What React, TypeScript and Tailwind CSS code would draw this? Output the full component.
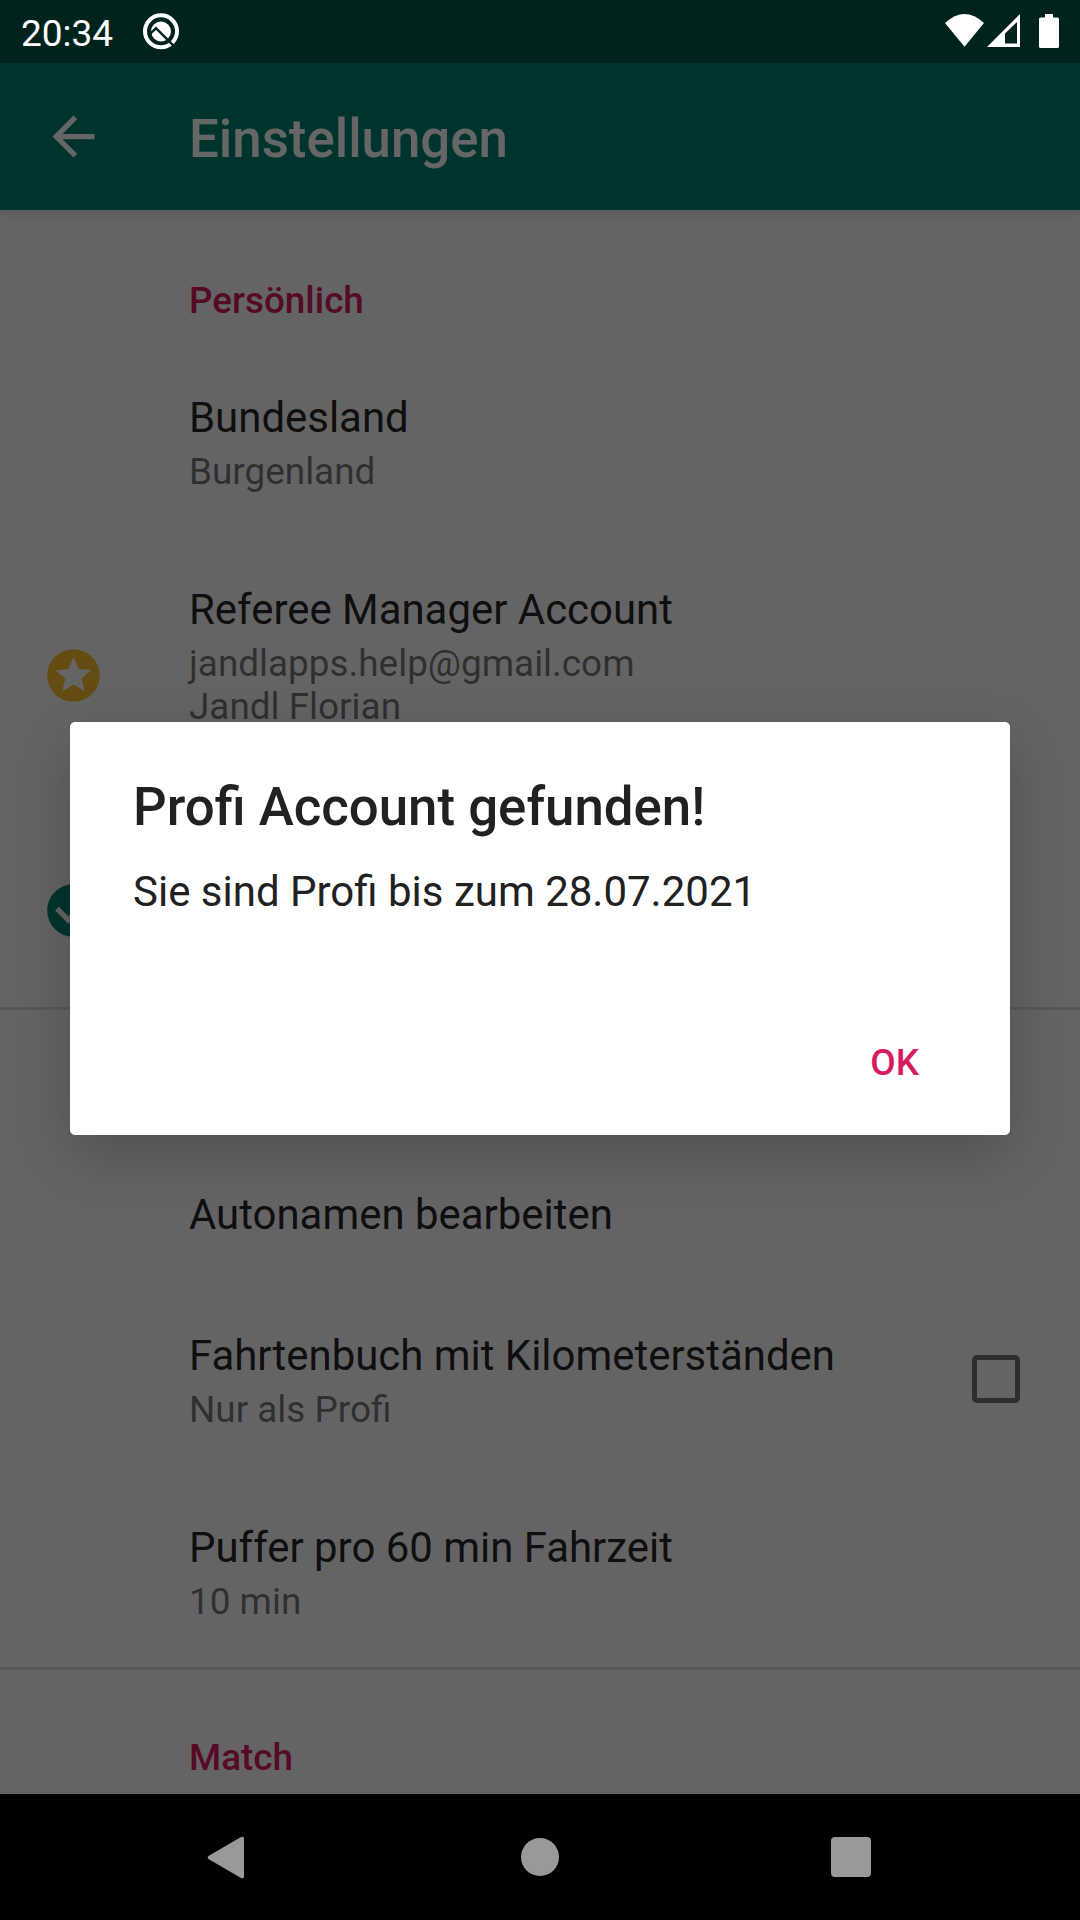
import type { ReactNode } from 'react';

interface PreferenceProps {
  title: string;
  summary?: string[];
  icon?: ReactNode;
  widget?: ReactNode;
}

function StarIcon() {
  return (
    <svg viewBox="0 0 24 24" className="w-[63px] h-[63px] fill-[#fbc02d]">
      <path d="M11.99 2C6.47 2 2 6.48 2 12s4.47 10 9.99 10C17.52 22 22 17.52 22 12S17.52 2 11.99 2zm4.24 16L12 15.45 7.77 18l1.12-4.81-3.73-3.23 4.92-.42L12 5l1.92 4.53 4.92.42-3.73 3.23L16.23 18z" />
    </svg>
  );
}

function CheckIcon() {
  return (
    <svg viewBox="0 0 24 24" className="w-[63px] h-[63px] fill-[#008577]">
      <path d="M12 2C6.48 2 2 6.48 2 12s4.48 10 10 10 10-4.48 10-10S17.52 2 12 2zm-2 15l-5-5 1.41-1.41L10 14.17l7.59-7.59L19 8l-9 9z" />
    </svg>
  );
}

function StatusBar() {
  return (
    <header className="flex h-[63px] justify-between bg-[#00231e] text-white">
      <div className="flex">
        <span className="ml-[21px] mt-[12px] w-[92px] text-[37px] leading-[43px]">20:34</span>
        <svg viewBox="0 0 40 40" className="ml-[28px] mt-[11px] w-10 h-10">
          <circle cx="20" cy="20.3" r="16" fill="none" stroke="#fff" strokeWidth="4" />
          <circle cx="20" cy="20.5" r="10" fill="#fff" />
          <path d="M9.5 25.500V22.500L15 17.200 33 35.200" fill="none" stroke="#00231e" strokeWidth="2.4" />
        </svg>
      </div>
      <svg viewBox="0 0 140 63" className="w-[140px] h-[63px] fill-white">
        <path d="M5 23Q24.5 5 44 23L24.5 46.7Z" />
        <path fillRule="evenodd" d="M47 47 80 14V47ZM65 33.5V43.5H77V22Z" />
        <path d="M105 14h8v3.5h4.5a1.5 1.5 0 0 1 1.5 1.5v27.5a1.5 1.5 0 0 1-1.5 1.5h-17a1.5 1.5 0 0 1-1.5-1.5V19a1.5 1.5 0 0 1 1.5-1.5h4.5z" />
      </svg>
    </header>
  );
}

function AppBar() {
  return (
    <div className="relative flex h-[147px] items-center bg-[#008577] pl-[42px] text-white shadow-[0_2px_10px_rgba(0,0,0,0.15)]">
      <svg viewBox="0 0 24 24" className="w-[63px] h-[63px] fill-white">
        <path d="M20 11H7.83l5.59-5.59L12 4l-8 8 8 8 1.41-1.41L7.83 13H20v-2z" />
      </svg>
      <h1 className="ml-[84px] mt-[5px] text-[52.8px] leading-[62px] font-medium">Einstellungen</h1>
    </div>
  );
}

function Category({ title, divided }: { title?: string; divided?: boolean }) {
  return (
    <div className={`h-[135px] pl-[189px] ${divided ? 'border-t-[3px] border-black/12 pt-[66px]' : 'pt-[69px]'}`}>
      <h2 className="text-[36.85px] leading-[43px] font-medium text-[#d81b60]">{title}</h2>
    </div>
  );
}

function Preference({ title, summary, icon, widget }: PreferenceProps) {
  return (
    <div className="flex">
      <div className="w-[189px] shrink-0 self-center pl-[42px] pt-[42px]">{icon}</div>
      <div className="flex-1 pt-[44px] pb-[40px]">
        <div className="text-[41.93px] leading-[57px] text-black/87">{title}</div>
        {summary && (
          <div className="pt-1 pb-1 text-[36.9px] leading-[43px] text-black/54">
            {summary.map((line) => (
              <div key={line} className="h-[43px]">{line}</div>
            ))}
          </div>
        )}
      </div>
      {widget && <div className="self-center pr-[60px]">{widget}</div>}
    </div>
  );
}

function Dialog() {
  return (
    <div className="absolute inset-0 flex items-center justify-center bg-black/60">
      <div className="flex h-[413px] w-[940px] flex-col rounded-[5px] bg-white px-[63px] pt-[54px] text-[#212121] shadow-[0_20px_60px_rgba(0,0,0,0.2)]">
        <h2 className="text-[52.8px] leading-[62px] font-medium">Profi Account gefunden!</h2>
        <p className="mt-[29px] text-[42px] leading-[49px]">Sie sind Profi bis zum 28.07.2021</p>
        <button className="mt-[125px] mr-[28px] self-end text-[36.9px] leading-[43px] font-medium text-[#d81b60]">OK</button>
      </div>
    </div>
  );
}

function NavigationBar() {
  return (
    <nav className="flex h-[126px] items-center justify-center gap-[248px] bg-black">
      <svg viewBox="0 0 63 63" className="w-[63px] h-[63px] fill-[#999]">
        <path d="M10.4 30 43 11Q46 9.800 46 12.500V50.500Q46 53.200 43 52L10.400 33Q8.800 31.500 10.400 30Z" />
      </svg>
      <div className="flex w-[63px] justify-center">
        <div className="h-[38px] w-[38px] rounded-full bg-[#999]" />
      </div>
      <div className="flex w-[63px] justify-center">
        <div className="h-[40px] w-[40px] rounded-[4px] bg-[#999]" />
      </div>
    </nav>
  );
}

export default function App() {
  return (
    <div className="h-[1920px] w-[1080px] overflow-hidden bg-black font-['Roboto',sans-serif]">
      <StatusBar />
      <main className="relative h-[1731px] overflow-hidden bg-[#fafafa]">
        <AppBar />
        <Category title="Persönlich" />
        <Preference title="Bundesland" summary={['Burgenland']} />
        <Preference
          title="Referee Manager Account"
          summary={['jandlapps.help@gmail.com', 'Jandl Florian']}
          icon={<StarIcon />}
        />
        {/* this row is fully covered by the dialog, only its icon shows */}
        <div className="flex h-[235px] items-center pl-[42px] pt-[42px]">
          <CheckIcon />
        </div>
        <Category divided />
        <Preference title="Autonamen bearbeiten" />
        <Preference
          title="Fahrtenbuch mit Kilometerständen"
          summary={['Nur als Profi']}
          widget={<div className="h-[48px] w-[48px] rounded-[5px] border-[5px] border-black/54" />}
        />
        <Preference title="Puffer pro 60 min Fahrzeit" summary={['10 min']} />
        <Category title="Match" divided />
        <Dialog />
      </main>
      <NavigationBar />
    </div>
  );
}
